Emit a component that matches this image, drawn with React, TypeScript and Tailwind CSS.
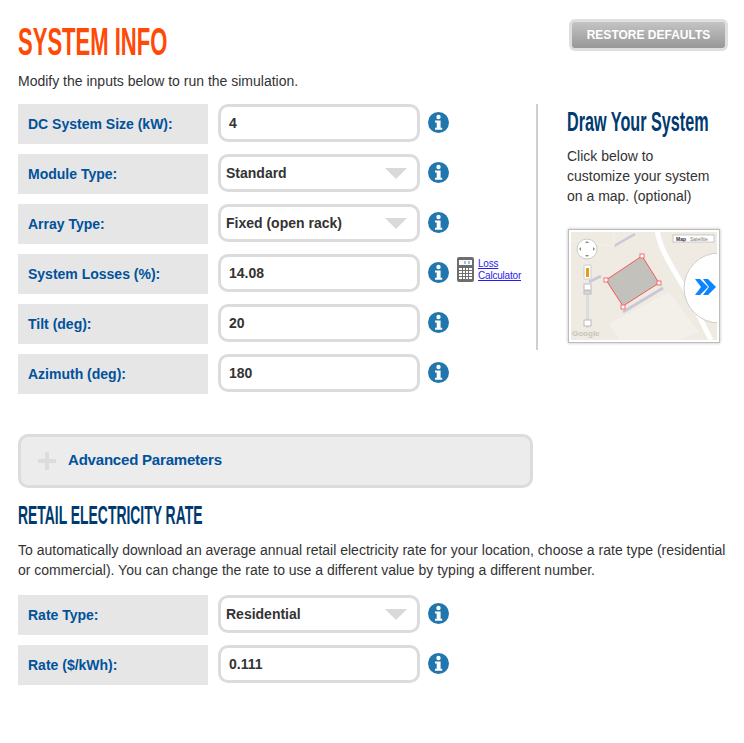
const sans = 'font-["Liberation_Sans",Arial,sans-serif]'

function InfoIcon() {
  return (
    <svg width="21" height="21" viewBox="0 0 21 21" className="shrink-0">
      <circle cx="10.5" cy="10.5" r="10.5" fill="#2176ae" />
      <circle cx="10.5" cy="5" r="2.2" fill="#fff" />
      <path d="M7 8.5h5.6v7.3h1.6v2H7v-2h1.7v-5.3H7z" fill="#fff" />
    </svg>
  )
}

function Arrow() {
  return <div className="h-0 w-0 border-x-[11px] border-t-[11px] border-x-transparent border-t-[#d9d9d9]" />
}

function Row({ label, value, select, children }: { label: string; value: string; select?: boolean; children?: React.ReactNode }) {
  return (
    <div className="flex h-10 items-start">
      <div className="flex h-10 w-[190px] items-center bg-[#e6e6e6] pl-[10px] text-[14px] font-bold text-[#00529b]">{label}</div>
      <div
        className={`ml-[10px] flex h-[38px] w-[202px] items-center justify-between rounded-[10px] border-[3px] border-[#dcdcdc] bg-white pr-[10px] text-[14px] font-bold text-[#333] ${select ? 'pl-[5px]' : 'pl-[8px]'}`}
      >
        <span>{value}</span>
        {select && <Arrow />}
      </div>
      <div className="ml-2 mt-2">
        <InfoIcon />
      </div>
      {children}
    </div>
  )
}

function LossCalculator() {
  return (
    <div className="ml-2 mt-1 flex">
      <svg width="17" height="25" viewBox="0 0 17 25" className="mt-[-1px]">
        <rect width="17" height="25" rx="2" fill="#6e6e6e" />
        <rect x="2" y="3" width="13" height="5" fill="#fff" />
        <rect x="7" y="4" width="2" height="3" fill="#9dbfe0" />
        <rect x="11" y="4" width="2" height="3" fill="#9dbfe0" />
        <path
          d="M2 11h3v2H2zM6 11h2v2H6zM9 11h2v2H9zM12 11h3v2h-3zM2 14h3v2H2zM6 14h2v2H6zM9 14h2v2H9zM12 14h3v2h-3zM2 17h3v2H2zM6 17h2v2H6zM9 17h2v2H9zM12 17h3v2h-3zM2 20h3v2H2zM6 20h2v2H6zM9 20h2v2H9zM12 20h3v2h-3z"
          fill="#fff"
        />
      </svg>
      <a href="#" className="ml-1 text-[10px] leading-[12px] tracking-[-0.2px] text-[#2a1aee] underline">
        Loss
        <br />
        Calculator
      </a>
    </div>
  )
}

function MapThumb() {
  return (
    <div className="ml-px mt-[23px] h-[114px] w-[152px] border border-[#bdbdbd] bg-white p-[2px] shadow-[0_0_3px_#bbb]">
      <svg width="146" height="108" viewBox="2 0 146 108" className="block">
        <rect width="148" height="108" fill="#efebe2" />
        <path d="M45 14L66 2" stroke="#c9c8d6" strokeWidth="2.5" fill="none" />
        <path d="M45 14V-2M0 8L45 14" stroke="#f3f0e9" strokeWidth="1" />
        <path d="M32 44L20 50" stroke="#c9c8d6" strokeWidth="3" />
        <path d="M92 104L120 88" stroke="#c9c8d6" strokeWidth="3" />
        <path d="M54 80L94 56" stroke="#c9c8d6" strokeWidth="3" />
        <path d="M40 92L100 60L130 100L110 108H50z" fill="#f3f0e9" />
        <path d="M88-2C92 24 112 46 128 80L142 108" stroke="#fff" strokeWidth="5" fill="none" />
        <circle cx="18" cy="17" r="10" fill="#fff" stroke="#ccc" />
        <path d="M18 9l-2 2h4zM18 25l-2-2h4zM10 17l2-2v4zM26 17l-2-2v4z" fill="#888" />
        <rect x="15" y="33" width="7" height="14" rx="1" fill="#fff" stroke="#ccc" />
        <rect x="17" y="36" width="3" height="9" fill="#e89a1c" />
        <rect x="17" y="52" width="3" height="44" fill="#ddd" />
        <rect x="15" y="52" width="7" height="6" fill="#fff" stroke="#bbb" />
        <rect x="15" y="59" width="7" height="3" fill="#ddd" stroke="#bbb" />
        <rect x="15" y="88" width="7" height="6" fill="#fff" stroke="#bbb" />
        <path d="M73 24L90 51L54 74L37 48z" fill="#c3c1bb" stroke="#f05a5a" />
        <g fill="#fff" stroke="#f07070">
          <rect x="71" y="22" width="4" height="4" />
          <rect x="88" y="49" width="4" height="4" />
          <rect x="52" y="73" width="4" height="4" />
          <rect x="35" y="46" width="4" height="4" />
        </g>
        <rect x="104" y="3" width="41" height="7" fill="#fff" stroke="#aaa" strokeWidth="0.6" />
        <text x="107" y="9" fontSize="5" fontWeight="700" fill="#333">Map</text>
        <text x="121" y="9" fontSize="5" fill="#777">Satellite</text>
        <text x="3" y="104" fontSize="8" fontWeight="700" fill="#c5c5c0">Google</text>
        <circle cx="150" cy="56" r="35" fill="#fff" stroke="#ccc" />
        <path d="M126 47h5l8 8-8 8h-5l6-8zM134 47h5l8 8-8 8h-5l6-8z" fill="#0a84ff" />
      </svg>
    </div>
  )
}

export default function App() {
  return (
    <div className={`${sans} min-h-[743px] overflow-hidden bg-white px-[18px] text-[#333]`}>
      <div className="flex items-start justify-between pt-[19px]">
        <h1 className="mt-[1px] origin-left scale-x-[0.565] whitespace-nowrap text-[39px] font-bold leading-[44px] text-[#ff4a06]">SYSTEM INFO</h1>
        <button className="mr-[-2px] flex h-8 w-[159px] shrink-0 items-center justify-center rounded-[6px] border-[3px] border-[#dfdfdf] bg-gradient-to-b from-[#c4c4c4] to-[#979797] text-[12px] font-bold text-white">
          RESTORE DEFAULTS
        </button>
      </div>
      <p className="mt-[7px] text-[14px] leading-[20px]">Modify the inputs below to run the simulation.</p>

      <div className="mt-[13px] flex">
        <div className="flex w-[518px] shrink-0 flex-col gap-[10px]">
          <Row label="DC System Size (kW):" value="4" />
          <Row label="Module Type:" value="Standard" select />
          <Row label="Array Type:" value="Fixed (open rack)" select />
          <Row label="System Losses (%):" value="14.08">
            <LossCalculator />
          </Row>
          <Row label="Tilt (deg):" value="20" />
          <Row label="Azimuth (deg):" value="180" />
        </div>
        <div className="h-[246px] w-[2px] shrink-0 bg-[#cfcfcf]" />
        <div className="ml-[29px] w-[160px] shrink-0">
          <h2 className="mt-[3px] origin-left scale-x-[0.6] whitespace-nowrap text-[27px] font-bold leading-[30px] text-[#003a70]">Draw Your System</h2>
          <p className="mt-[9px] text-[14px] leading-[20px]">
            Click below to
            <br />
            customize your system
            <br />
            on a map. (optional)
          </p>
          <MapThumb />
        </div>
      </div>

      <div className="mt-[40px] flex h-[54px] w-[515px] items-center rounded-[10px] border-[3px] border-[#dcdcdc] bg-[#ececec]">
        <svg width="18" height="18" viewBox="0 0 18 18" className="ml-[17px]">
          <path d="M7 0h4v7h7v4h-7v7H7v-7H0V7h7z" fill="#dcdcdc" />
        </svg>
        <span className="mb-[2px] ml-3 text-[15px] font-bold tracking-[-0.2px] text-[#00529b]">Advanced Parameters</span>
      </div>

      <h2 className="mt-[12px] origin-left scale-x-[0.535] whitespace-nowrap text-[26px] font-bold leading-[30px] text-[#003a70]">RETAIL ELECTRICITY RATE</h2>
      <p className="mt-[10px] w-[716px] text-[14px] leading-[20px]">
        To automatically download an average annual retail electricity rate for your location, choose a rate type (residential or commercial). You can change the rate to use a different value by typing a different number.
      </p>

      <div className="mt-[15px] flex flex-col gap-[10px]">
        <Row label="Rate Type:" value="Residential" select />
        <Row label="Rate ($/kWh):" value="0.111" />
      </div>
    </div>
  )
}
